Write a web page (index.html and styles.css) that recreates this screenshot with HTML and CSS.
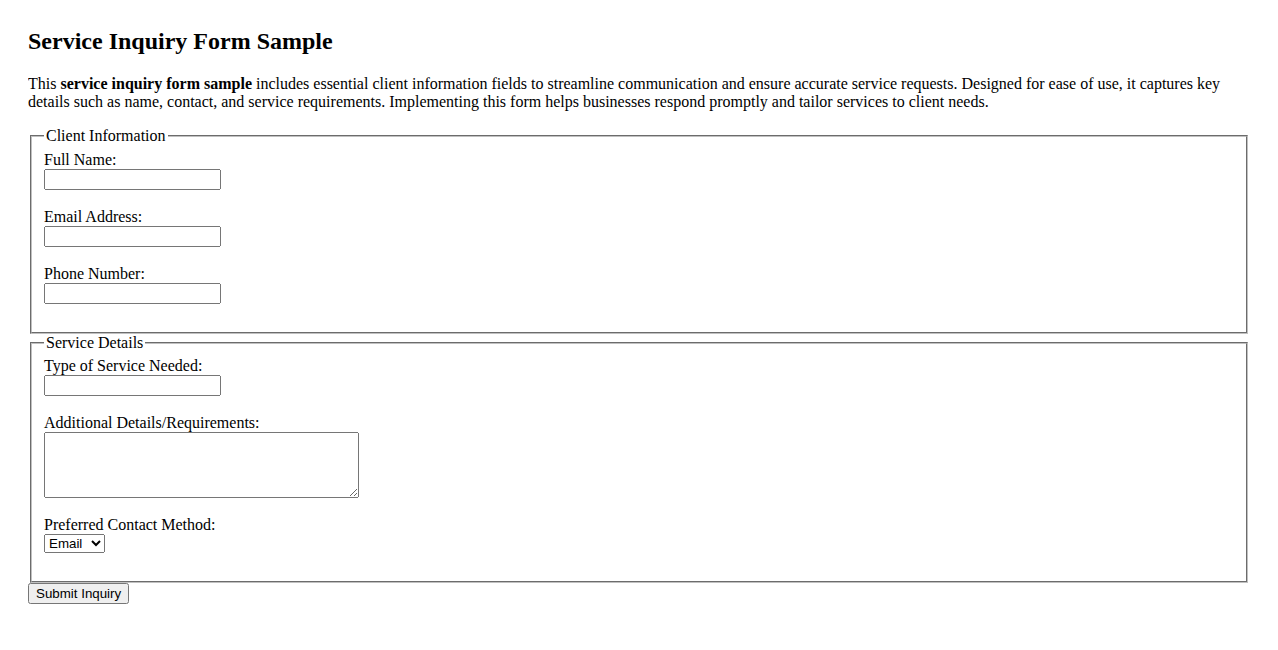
FILE: index.html
```html
<!DOCTYPE html>
<html lang="en">
<head>
<meta charset="utf-8">
<title>Service Inquiry Form Sample</title>
<link rel="stylesheet" href="styles.css">
</head>
<body class="page">
<h2 class="title">Service Inquiry Form Sample</h2>
<p class="intro">This <strong>service inquiry form sample</strong> includes essential client information fields to streamline communication and ensure accurate service requests. Designed for ease of use, it captures key details such as name, contact, and service requirements. Implementing this form helps businesses respond promptly and tailor services to client needs.</p>
<form class="form">
<fieldset class="group">
<legend class="legend">Client Information</legend>
<label class="label" for="name">Full Name:</label><br>
<input class="field" type="text" id="name" name="name"><br><br>
<label class="label" for="email">Email Address:</label><br>
<input class="field" type="email" id="email" name="email"><br><br>
<label class="label" for="phone">Phone Number:</label><br>
<input class="field" type="tel" id="phone" name="phone"><br><br>
</fieldset>
<fieldset class="group">
<legend class="legend">Service Details</legend>
<label class="label" for="service">Type of Service Needed:</label><br>
<input class="field" type="text" id="service" name="service"><br><br>
<label class="label" for="details">Additional Details/Requirements:</label><br>
<textarea class="area" id="details" name="details" rows="4" cols="40"></textarea><br><br>
<label class="label" for="contact">Preferred Contact Method:</label><br>
<select class="select" id="contact" name="contact">
<option>Email</option>
<option>Phone</option>
</select><br><br>
</fieldset>
<button class="submit" type="submit">Submit Inquiry</button>
</form>
</body>
</html>
```
FILE: styles.css
```css
.page {
  margin: 28px;
  font-family: "Liberation Serif", "Times New Roman", serif;
  font-size: 16px;
  color: #000;
  background: #fff;
}
.title {
  font-size: 24px;
  font-weight: bold;
  margin-top: 0;
  margin-bottom: 20px;
}
.group {
  border: 2px groove #c0c0c0;
  margin: 0 2px;
}
.field, .area, .select, .submit {
  font-family: "Liberation Sans", Arial, sans-serif;
  font-size: 13.333px;
}
.field {
  box-sizing: border-box;
  width: 177px;
  height: 21px;
}
.area {
  box-sizing: border-box;
  width: 315px;
  height: 66px;
  vertical-align: top;
  font-family: "Liberation Mono", "Courier New", monospace;
}
```
